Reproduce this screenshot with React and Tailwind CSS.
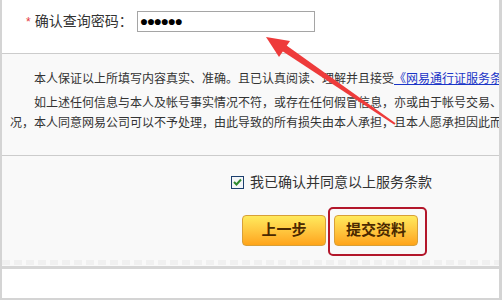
import React from "react";

const font = { fontFamily: '"Liberation Sans", "Noto Sans CJK SC", sans-serif' };

function Arrow() {
  return (
    <svg className="absolute left-0 top-0 pointer-events-none" width="502" height="300" viewBox="0 0 502 300">
      <polygon points="266,37 290,41 279,57" fill="#ee3b3b" />
      <polygon points="281.8,50.8 286.2,45.2 395.6,123.2 394.4,124.8" fill="#ee3b3b" />
    </svg>
  );
}

export default function App() {
  return (
    <div className="relative w-[502px] h-[300px] overflow-hidden bg-white" style={font}>
      <div className="flex flex-col h-full border-l-2 border-r-[3px] border-[#d4d4d4]">
        {/* top row */}
        <div className="h-[54px] shrink-0 bg-white border-b border-[#cccccc] flex items-start pt-[11px] pl-[24px]">
          <div className="flex items-center h-[21px] text-[14px] text-[#333]">
            <span className="text-[#e4393c] text-[12px] mr-[4px]">*</span>
            <span>确认查询密码：</span>
          </div>
          <div className="ml-[4px] w-[178px] h-[21px] border border-[#a5a5a5] bg-white flex items-center pl-[2px] text-[14px] font-bold tracking-[-1.5px] text-black">
            ●●●●●●
          </div>
        </div>

        {/* agreement text */}
        <div className="h-[102px] shrink-0 bg-[#f9f9f9] border-b border-[#cccccc] overflow-hidden text-[12px] text-[#333] whitespace-nowrap pl-[8px] pt-[15px]">
          <div className="leading-[20px] pl-[24px]">
            本人保证以上所填写内容真实、准确。且已认真阅读、理解并且接受
            <span className="text-[#1a35c7] underline">《网易通行证服务条款》</span>
          </div>
          <div className="leading-[20px] pl-[24px] mt-[4px]">
            如上述任何信息与本人及帐号事实情况不符，或存在任何假冒信息，亦或由于帐号交易、转让等
          </div>
          <div className="leading-[20px]">
            况，本人同意网易公司可以不予处理，由此导致的所有损失由本人承担，且本人愿承担因此而产生
          </div>
        </div>

        {/* confirm + buttons */}
        <div className="h-[113px] shrink-0 bg-[#f9f9f9] border-b-[3px] border-[#d6d6d6] relative">
          <div className="flex items-center pl-[229px] pt-[18px]">
            <span className="w-[13px] h-[13px] border border-[#1c3f6e] bg-[#f4f6f8] flex items-center justify-center">
              <svg width="9" height="8" viewBox="0 0 9 8">
                <path d="M1 4 L3.5 6.5 L8 1.5" stroke="#2f8a2f" strokeWidth="2" fill="none" />
              </svg>
            </span>
            <span className="ml-[6px] text-[14px] text-[#333] leading-[16px]">我已确认并同意以上服务条款</span>
          </div>
          <div className="flex items-start pl-[240px] mt-[17px]">
            <button className="mt-[8px] w-[84px] h-[31px] rounded-[4px] border border-[#d8a038] bg-gradient-to-b from-[#ffea5c] to-[#ffa418] text-[15px] font-bold text-[#4a2800]">
              上一步
            </button>
            <div className="ml-[2px] pl-[4px] pr-[7px] pt-[6px] pb-[8px] border-2 border-[#b3172b] rounded-[5px]">
              <button className="w-[84px] h-[31px] rounded-[4px] border border-[#d8a038] bg-gradient-to-b from-[#ffea5c] to-[#ffa418] text-[15px] font-bold text-[#4a2800] block">
                提交资料
              </button>
            </div>
          </div>
          <div className="absolute left-0 right-0 bottom-[1px] h-[5px] bg-[repeating-linear-gradient(90deg,#f0f0f0_0px,#f0f0f0_8px,#f9f9f9_8px,#f9f9f9_12px)]" />
        </div>

        <div className="flex-1 bg-white border-b-2 border-[#d4d4d4]" />
      </div>
      <Arrow />
    </div>
  );
}
